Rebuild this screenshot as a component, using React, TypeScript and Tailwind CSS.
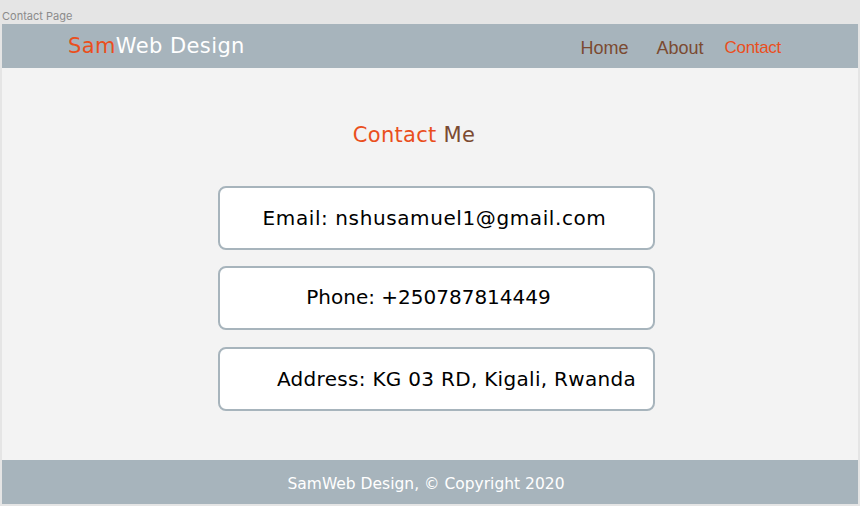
import React from "react";

export default function App() {
  return (
    <div className="w-[860px] h-[506px] bg-[#e5e5e5] flex flex-col overflow-hidden">
      <div className="h-[24px] pl-[2px] pt-[10px] text-[11px] leading-[13px] text-[#8b8b8b] [font-family:Inter,'Liberation_Sans',sans-serif]">
        Contact Page
      </div>
      <div className="mx-[2px] mb-[2px] flex-1 flex flex-col bg-[#f3f3f3]">
        <header className="h-[44px] bg-[#a7b4bc] flex items-center pl-[66px] pr-[77px]">
          <div className="text-[21px] tracking-[0.4px] text-white font-['DejaVu_Sans'] mt-[2px]">
            <span className="text-[#ea4f1d]">Sam</span>Web Design
          </div>
          <nav className="ml-auto flex items-center text-[18px] font-['Liberation_Sans'] text-[#7b4a31] mt-[4px]">
            <span>Home</span>
            <span className="ml-[28px]">About</span>
            <span className="ml-[21px] text-[17px] tracking-[-0.3px] text-[#ea4f1d]">Contact</span>
          </nav>
        </header>
        <main className="flex-1 flex flex-col items-center">
          <h1 className="mt-[54px] mr-[32px] text-[21px] tracking-[0.3px] leading-[26px] font-['DejaVu_Sans']">
            <span className="text-[#ea4f1d]">Contact</span>{" "}
            <span className="text-[#7b4a31]">Me</span>
          </h1>
          <div className="mt-[38px] ml-[13px] flex flex-col gap-[16px] font-['DejaVu_Sans'] text-[20px] text-black">
            <div className="w-[437px] h-[64px] bg-white border-2 border-[#a7b4bc] rounded-[8px] flex items-center justify-center pr-[4px] tracking-[0.6px]">
              Email: nshusamuel1@gmail.com
            </div>
            <div className="w-[437px] h-[64px] bg-white border-2 border-[#a7b4bc] rounded-[8px] flex items-center justify-center pr-[16px] pb-[2px]">
              Phone: +250787814449
            </div>
            <div className="mt-[1px] w-[437px] h-[64px] bg-white border-2 border-[#a7b4bc] rounded-[8px] flex items-center justify-end pr-[17px] tracking-[0.3px]">
              Address: KG 03 RD, Kigali, Rwanda
            </div>
          </div>
        </main>
        <footer className="h-[44px] bg-[#a7b4bc] flex items-center justify-center text-[15.5px] text-white font-['DejaVu_Sans'] pr-[8px] pt-[5px]">
          SamWeb Design, © Copyright 2020
        </footer>
      </div>
    </div>
  );
}
